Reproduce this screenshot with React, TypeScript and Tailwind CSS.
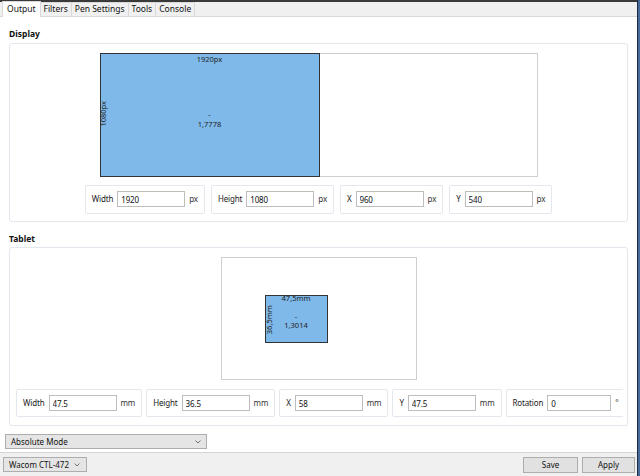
import type { ReactNode } from "react";

const tabs = ["Output", "Filters", "Pen Settings", "Tools", "Console"];

function Field({
  label,
  value,
  unit,
  className = "",
  inputClass = "w-[68px]",
}: {
  label: string;
  value: string;
  unit: string;
  className?: string;
  inputClass?: string;
}) {
  return (
    <div
      className={`flex shrink-0 items-center gap-[3px] whitespace-nowrap rounded-[2px] border border-[#e4e8ee] bg-white pl-[6px] pr-[6px] tracking-[-0.15px] ${className}`}
    >
      <span className="text-[#222]">{label}</span>
      <input
        readOnly
        value={value}
        className={`ml-[1px] h-[16px] border border-[#bdbdbd] bg-white px-[3px] text-[8px] text-[#111] outline-none ${inputClass}`}
      />
      <span className="ml-[1px] text-[#333]">{unit}</span>
    </div>
  );
}

function Section({ title, children }: { title: string; children: ReactNode }) {
  return (
    <div>
      <h2 className="ml-[9px] text-[8.5px] font-bold text-[#111]">{title}</h2>
      <div className="ml-[9px] mt-[4px] w-[619px] rounded-[3px] border border-[#e4e8ee] bg-white shadow-[0_0_1px_rgba(0,0,0,0.05)]">
        {children}
      </div>
    </div>
  );
}

function Chevron() {
  return (
    <svg width="6" height="4" viewBox="0 0 6 4" className="text-[#666]">
      <path d="M0.5 0.5 L3 3 L5.5 0.5" fill="none" stroke="currentColor" strokeWidth="0.9" />
    </svg>
  );
}

export default function App() {
  return (
    <div
      className="flex h-[476px] w-[640px] overflow-hidden bg-white text-[8px] leading-none text-[#111]"
      style={{ fontFamily: '"Noto Sans", "Open Sans", sans-serif' }}
    >
      <div className="flex w-[637px] flex-col">
        {/* tab strip */}
        <div className="h-[2px] bg-[#3a3a3a]" />
        <div className="flex h-[15px] items-end border-b border-[#d9d9d9] bg-[#f0f0f0] pl-[2px]">
          {tabs.map((t, i) => (
            <div
              key={t}
              className={
                i === 0
                  ? "relative -mb-[1px] flex h-[16px] items-center border border-b-0 border-[#d9d9d9] bg-white px-[4px] text-[8.5px]"
                  : "flex h-[14px] items-center border border-l-0 border-b-0 border-[#d9d9d9] bg-[#f0f0f0] px-[3px] text-[8.5px]"
              }
            >
              {t}
            </div>
          ))}
        </div>

        {/* page body */}
        <div className="flex flex-1 flex-col pt-[13px]">
          <Section title="Display">
            <div className="flex justify-center pt-[9px]">
              <div className="relative h-[124px] w-[438px] border border-[#cfcfcf] bg-white">
                <div className="absolute -left-px -top-px flex h-[124px] w-[220px] flex-col items-center border border-[#333] bg-[#7fb9ea] text-[7.5px] text-[#222]">
                  <span className="mt-[2px]">1920px</span>
                  <span className="absolute left-[-10px] top-[56px] -rotate-90">1080px</span>
                  <span className="mt-[48px]">-</span>
                  <span className="mt-[2px]">1,7778</span>
                </div>
              </div>
            </div>
            <div className="flex justify-center gap-[6px] pb-[7px] pt-[8px]">
              <Field className="h-[29px]" label="Width" value="1920" unit="px" />
              <Field className="h-[29px]" label="Height" value="1080" unit="px" />
              <Field className="h-[29px]" label="X" value="960" unit="px" />
              <Field className="h-[29px]" label="Y" value="540" unit="px" />
            </div>
          </Section>

          <div className="mt-[13px]">
            <Section title="Tablet">
              <div className="flex justify-center pt-[9px]">
                <div className="relative h-[123px] w-[196px] border border-[#cfcfcf] bg-white">
                  <div className="absolute left-[43px] top-[37px] flex h-[48px] w-[63px] flex-col items-center border border-[#333] bg-[#7fb9ea] text-[7.5px] text-[#222]">
                    <span className="-mt-[1px]">47,5mm</span>
                    <span className="absolute left-[-11px] top-[20px] -rotate-90">36,5mm</span>
                    <span className="mt-[10px]">-</span>
                    <span className="mt-[2px]">1,3014</span>
                  </div>
                </div>
              </div>
              <div className="ml-[6px] mr-[4px] flex gap-[4px] overflow-hidden pb-[8px] pt-[9px]">
                <Field className="h-[28px]" label="Width" value="47.5" unit="mm" />
                <Field className="h-[28px]" label="Height" value="36.5" unit="mm" />
                <Field className="h-[28px]" label="X" value="58" unit="mm" />
                <Field className="h-[28px]" label="Y" value="47.5" unit="mm" />
                <Field
                  className="h-[28px] border-r-0 pr-[2px]"
                  inputClass="w-[64px]"
                  label="Rotation"
                  value="0"
                  unit="°"
                />
              </div>
            </Section>
          </div>

          <div className="ml-[5px] mt-[8px] flex h-[15px] w-[202px] items-center justify-between border border-[#adadad] bg-[#e5e5e5] pl-[5px] pr-[5px]">
            <span>Absolute Mode</span>
            <Chevron />
          </div>
        </div>

        {/* bottom bar */}
        <div className="flex h-[24px] items-center justify-between border-t border-[#d5d5d5] bg-[#f0f0f0] pl-[3px] pr-[2px]">
          <div className="flex h-[15px] w-[84px] items-center justify-between whitespace-nowrap border border-[#adadad] bg-[#e5e5e5] pl-[5px] pr-[6px]">
            <span>Wacom CTL-472</span>
            <Chevron />
          </div>
          <div className="flex gap-[4px]">
            <button className="h-[16px] w-[55px] border border-[#adadad] bg-[#e1e1e1] text-[8px]">Save</button>
            <button className="h-[16px] w-[53px] border border-[#adadad] bg-[#e1e1e1] text-[8px]">Apply</button>
          </div>
        </div>
      </div>
      <div className="w-[3px] border-l border-[#1c2a4a] bg-[#4a6a9a]" />
    </div>
  );
}
